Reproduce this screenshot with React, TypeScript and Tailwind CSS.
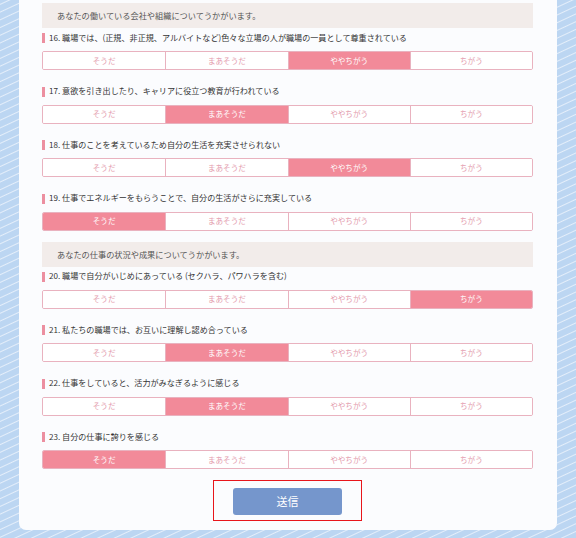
const options = ["そうだ", "まあそうだ", "ややちがう", "ちがう"];

const sections = [
  {
    title: "あなたの働いている会社や組織についてうかがいます。",
    questions: [
      { no: 16, text: "職場では、(正規、非正規、アルバイトなど)色々な立場の人が職場の一員として尊重されている", answer: 2 },
      { no: 17, text: "意欲を引き出したり、キャリアに役立つ教育が行われている", answer: 1 },
      { no: 18, text: "仕事のことを考えているため自分の生活を充実させられない", answer: 2 },
      { no: 19, text: "仕事でエネルギーをもらうことで、自分の生活がさらに充実している", answer: 0 },
    ],
  },
  {
    title: "あなたの仕事の状況や成果についてうかがいます。",
    questions: [
      { no: 20, text: "職場で自分がいじめにあっている (セクハラ、パワハラを含む)", answer: 3 },
      { no: 21, text: "私たちの職場では、お互いに理解し認め合っている", answer: 1 },
      { no: 22, text: "仕事をしていると、活力がみなぎるように感じる", answer: 1 },
      { no: 23, text: "自分の仕事に誇りを感じる", answer: 0 },
    ],
  },
];

const Question = ({ no, text, answer, last }: { no: number; text: string; answer: number; last: boolean }) => (
  <div className={last ? "mb-[11px]" : "mb-[14.5px]"}>
    <div className="flex items-center h-[14px] mb-[6px]">
      <span className="w-[3px] h-[10px] bg-[#ec8fa0] mr-[4px]" />
      <span className="text-[8.1px] text-[#333] leading-none">
        {no}. {text}
      </span>
    </div>
    <div className="grid grid-cols-4 h-[19px] border border-[#e9b2bf] rounded-[2px] overflow-hidden">
      {options.map((o, i) => (
        <div
          key={o}
          className={`flex items-center justify-center text-[7.6px] ${
            i > 0 ? "border-l border-[#e9b2bf]" : ""
          } ${i === answer ? "bg-[#f28a99] text-white" : "bg-white text-[#e39aac]"}`}
        >
          {o}
        </div>
      ))}
    </div>
  </div>
);

export default function App() {
  return (
    <div
      className="w-[576px] h-[538px] overflow-hidden bg-[#bcd6f2] bg-[repeating-linear-gradient(335deg,#bcd6f2_0px,#bcd6f2_5px,#e4eefa_6px,#bcd6f2_7px)]"
      style={{ fontFamily: '"Noto Sans CJK JP", "Noto Sans", sans-serif' }}
    >
      <div className="ml-[19px] w-[538px] h-[530px] bg-[#fbfcfe] rounded-b-[7px] pl-[23px] pr-[24px] pt-[3px]">
        {sections.map((s) => (
          <div key={s.title}>
            <div className="h-[25px] bg-[#f2ecea] flex items-center pl-[15px] mb-[3px] text-[8.2px] text-[#555]">
              {s.title}
            </div>
            {s.questions.map((q, i) => (
              <Question key={q.no} {...q} last={i === s.questions.length - 1} />
            ))}
          </div>
        ))}
        <div className="flex justify-center mt-[6px]">
          <div className="w-[149px] h-[41px] border border-[#e8151b] flex justify-center pt-[7px]">
            <button className="w-[109px] h-[27px] rounded-[3px] bg-[#7596cc] text-white text-[11px]">
              送信
            </button>
          </div>
        </div>
      </div>
    </div>
  );
}
